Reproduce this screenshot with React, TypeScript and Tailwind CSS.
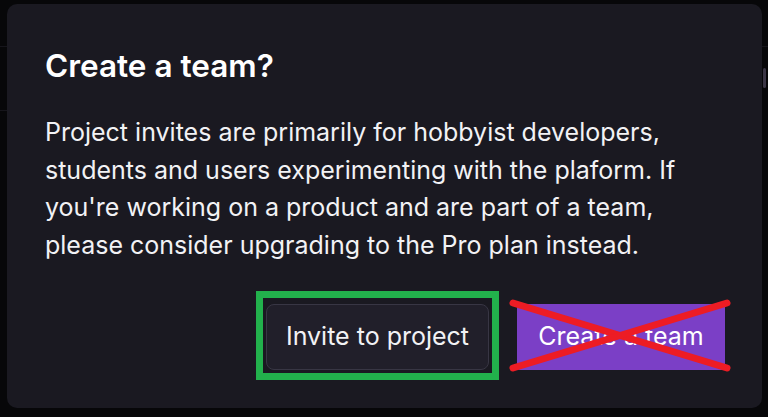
import React from "react";

export default function App() {
  return (
    <div
      className="relative w-[768px] h-[417px] overflow-hidden bg-[#070709]"
      style={{ fontFamily: "Inter, 'Noto Sans', sans-serif" }}
    >
      <div className="absolute left-0 top-[46px] w-[7px] h-px bg-[#16151b]" />
      <div className="absolute left-0 top-[110px] w-[7px] h-px bg-[#16151b]" />
      <div className="absolute right-0 top-[46px] w-[6px] h-px bg-[#16151b]" />
      <div className="absolute right-[2px] top-[68px] w-[3px] h-[20px] rounded-full bg-[#3b3646]" />
      <div className="ml-[7px] mt-[4px] w-[755px] h-[404px] rounded-[10px] bg-[#1a1921] pl-[38px] pr-[37px] pt-[44px] flex flex-col">
        <h1 className="text-[31.5px] leading-[36px] font-semibold text-white">
          Create a team?
        </h1>
        <p className="mt-[30px] text-[25px] leading-[37.5px] text-[#f2f2f5]">
          Project invites are primarily for hobbyist developers,
          <br />
          students and users experimenting with the plaform. If
          <br />
          you're working on a product and are part of a team,
          <br />
          please consider upgrading to the Pro plan instead.
        </p>
        <div className="mt-[40px] flex justify-end gap-[28px]">
          <div className="relative">
            <button className="h-[66px] w-[223px] rounded-[8px] border border-[#383644] bg-[#211f2a] text-[25px] text-[#f2f2f5] flex items-center justify-center">
              Invite to project
            </button>
            <div className="pointer-events-none absolute left-[-10px] right-[-10px] top-[-13px] bottom-[-10px] border-[7px] border-[#22b14c]" />
          </div>
          <div className="relative">
            <button className="h-[66px] w-[208px] rounded-[3px] bg-[#7b3fc6] text-[25px] text-white flex items-center justify-center">
              Create a team
            </button>
            <svg
              className="pointer-events-none absolute left-[-8px] top-[-6px]"
              width="226"
              height="78"
              viewBox="0 0 226 78"
            >
              <line x1="4" y1="5" x2="218" y2="70" stroke="#ed1c24" strokeWidth="7" strokeLinecap="round" />
              <line x1="4" y1="70" x2="218" y2="5" stroke="#ed1c24" strokeWidth="7" strokeLinecap="round" />
            </svg>
          </div>
        </div>
      </div>
    </div>
  );
}
